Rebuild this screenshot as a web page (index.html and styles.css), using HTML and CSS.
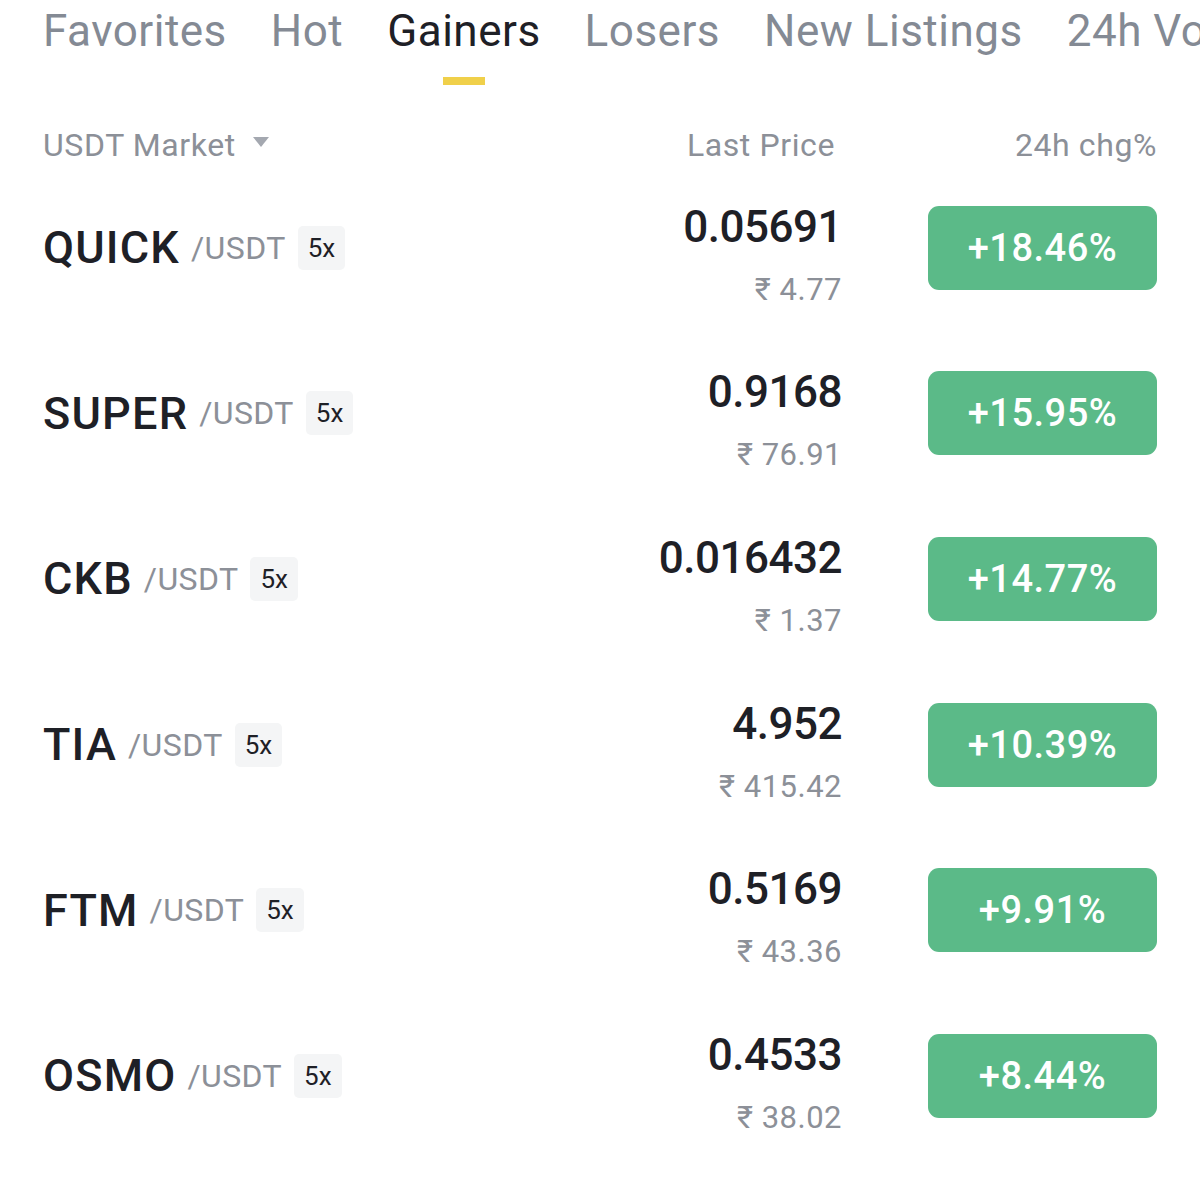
FILE: index.html
```html
<!DOCTYPE html>
<html lang="en">
<head>
    <meta charset="UTF-8">
    <meta name="viewport" content="width=device-width, initial-scale=1.0">
    <title>Markets - Gainers</title>
    <link rel="stylesheet" href="styles.css">
</head>
<body>
    <nav class="tabs">
        <a class="tab">Favorites</a>
        <a class="tab">Hot</a>
        <a class="tab active">Gainers</a>
        <a class="tab">Losers</a>
        <a class="tab">New Listings</a>
        <a class="tab">24h Vol</a>
    </nav>

    <div class="market">
        <div class="market-head">
            <div class="head-pair">
                USDT Market
                <svg class="caret" width="18" height="12" viewBox="0 0 18 12">
                    <path d="M1 1h16l-8 10z" fill="#a4a8b0"/>
                </svg>
            </div>
            <div class="head-price">Last Price</div>
            <div class="head-chg">24h chg%</div>
        </div>

        <div class="row">
            <div class="pair"><span class="base">QUICK</span><span class="quote">/USDT</span><span class="lev">5x</span></div>
            <div class="price"><span class="last">0.05691</span><span class="fiat">₹ 4.77</span></div>
            <div class="chg">+18.46%</div>
        </div>
        <div class="row">
            <div class="pair"><span class="base">SUPER</span><span class="quote">/USDT</span><span class="lev">5x</span></div>
            <div class="price"><span class="last">0.9168</span><span class="fiat">₹ 76.91</span></div>
            <div class="chg">+15.95%</div>
        </div>
        <div class="row">
            <div class="pair"><span class="base">CKB</span><span class="quote">/USDT</span><span class="lev">5x</span></div>
            <div class="price"><span class="last">0.016432</span><span class="fiat">₹ 1.37</span></div>
            <div class="chg">+14.77%</div>
        </div>
        <div class="row">
            <div class="pair"><span class="base">TIA</span><span class="quote">/USDT</span><span class="lev">5x</span></div>
            <div class="price"><span class="last">4.952</span><span class="fiat">₹ 415.42</span></div>
            <div class="chg">+10.39%</div>
        </div>
        <div class="row">
            <div class="pair"><span class="base">FTM</span><span class="quote">/USDT</span><span class="lev">5x</span></div>
            <div class="price"><span class="last">0.5169</span><span class="fiat">₹ 43.36</span></div>
            <div class="chg">+9.91%</div>
        </div>
        <div class="row">
            <div class="pair"><span class="base">OSMO</span><span class="quote">/USDT</span><span class="lev">5x</span></div>
            <div class="price"><span class="last">0.4533</span><span class="fiat">₹ 38.02</span></div>
            <div class="chg">+8.44%</div>
        </div>
    </div>
</body>
</html>
```

FILE: styles.css
```css
* {
    margin: 0;
    padding: 0;
    box-sizing: border-box;
}

body {
    font-family: Roboto, "Noto Sans", sans-serif;
    background: #ffffff;
    color: #1e2026;
    width: 1200px;
    overflow: hidden;
}

.tabs {
    display: flex;
    gap: 44px;
    padding: 0 43px;
    height: 100px;
    white-space: nowrap;
}

.tab {
    position: relative;
    font-size: 44px;
    line-height: 62px;
    color: #848a94;
    letter-spacing: 0.5px;
}

.tab.active {
    color: #1e2026;
}

.tab.active::after {
    content: '';
    position: absolute;
    left: 50%;
    top: 77px;
    width: 42px;
    height: 8px;
    margin-left: -21px;
    background: #f0d04a;
}

.market {
    padding: 0 43px;
}

.market-head {
    display: flex;
    align-items: center;
    height: 40px;
    margin-top: 25px;
    font-size: 32px;
    letter-spacing: 0.6px;
    color: #8c9098;
}

.head-pair {
    flex: 1;
    display: flex;
    align-items: center;
    gap: 16px;
}

.caret {
    margin-top: -6px;
}

.head-chg {
    width: 322px;
    text-align: right;
}

.row {
    display: flex;
    align-items: center;
    height: 165.6px;
}

.pair {
    flex: 1;
    display: flex;
    align-items: center;
}

.base {
    font-size: 45px;
    font-weight: 500;
    letter-spacing: 1.2px;
    color: #1e2026;
}

.quote {
    font-size: 32px;
    color: #8c9098;
    margin-left: 11px;
    letter-spacing: 0.4px;
}

.lev {
    margin-left: 12px;
    background: #f4f5f6;
    border-radius: 5px;
    font-size: 26px;
    color: #1e2026;
    padding: 0 10px;
    height: 44px;
    line-height: 44px;
}

.price {
    display: flex;
    flex-direction: column;
    align-items: flex-end;
    gap: 20px;
    margin-right: 86px;
    margin-top: 14px;
}

.last {
    font-size: 44px;
    font-weight: 500;
    line-height: 50px;
    letter-spacing: -0.5px;
    color: #1e2026;
}

.fiat {
    font-size: 31px;
    line-height: 36px;
    color: #8c9098;
    letter-spacing: 0.5px;
}

.chg {
    width: 229px;
    height: 84px;
    border-radius: 11px;
    background: #5bba88;
    color: #ffffff;
    font-size: 38px;
    font-weight: 500;
    display: flex;
    align-items: center;
    justify-content: center;
    letter-spacing: 0.5px;
}
```
